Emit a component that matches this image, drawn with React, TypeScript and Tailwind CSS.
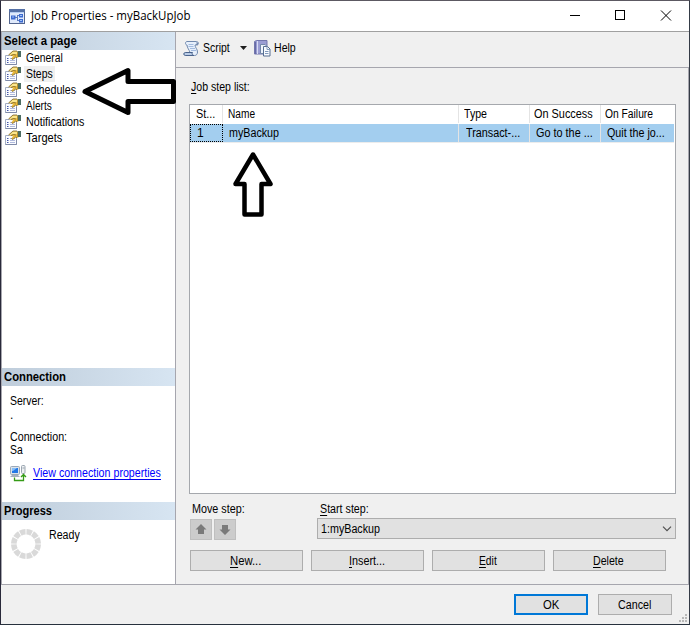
import React, { useLayoutEffect, useRef, useState } from 'react';

// Text condensed or widened to an exact width.
function T({ w, children, className = '' }: { w: number; children: React.ReactNode; className?: string }) {
  const ref = useRef<HTMLSpanElement>(null);
  const [scale, setScale] = useState(1);
  useLayoutEffect(() => {
    if (ref.current) setScale(w / ref.current.offsetWidth);
  }, [w]);
  return (
    <span className="inline-block overflow-visible text-left align-top" style={{ width: w }}>
      <span ref={ref} className={`inline-block origin-left whitespace-nowrap ${className}`} style={{ transform: `scaleX(${scale})` }}>
        {children}
      </span>
    </span>
  );
}

const U = ({ children }: { children: React.ReactNode }) => (
  <span className="underline decoration-1 underline-offset-2">{children}</span>
);

function PageIcon() {
  return (
    <svg width="16" height="16" viewBox="0 0 16 16" className="shrink-0">
      <path d="M.5 5.500h11v9H.5z" fill="#fbfcff" stroke="#a3adc4" />
      <path d="M.5 14.500h11V9" fill="none" stroke="#7f8aa8" />
      <path d="M2 8h1.500v1H2zM2 10h1.500v1H2zM2 12h1.500v1H2z" fill="#4254a8" />
      <path d="M5 8h5v1H5zM5 10h5v1H5zM5 12h5v1H5z" fill="#b0badd" />
      <path d="M3.500 5L8 1h4l2 1.500V7l-2 1-1.500-1L8 9.500 6.500 8.500 8 6z" fill="#e9b93c" />
      <path d="M8 1.500h3.500L13 3l-2 1.500L8.500 4 6 5H4.500z" fill="#fbe68c" />
      <path d="M3.500 5L8 1h4M6 5.500l2.500-1L11 5M6.500 8.500L8 9.500l2.500-2.500 1.500 1" fill="none" stroke="#766129" strokeWidth=".8" />
      <path d="M12.500 1H16v6h-3z" fill="#4c6c62" />
      <path d="M12.500 2v5" stroke="#b7922f" />
    </svg>
  );
}

function Header({ w, children }: { w: number; children: React.ReactNode }) {
  return (
    <div className="flex h-[18px] shrink-0 items-center bg-linear-to-r from-[#bfcddb] to-[#d7e5f2] pl-[2px]">
      <T w={w} className="font-bold">{children}</T>
    </div>
  );
}

const pages: [string, number][] = [['General', 37], ['Steps', 27], ['Schedules', 50], ['Alerts', 26], ['Notifications', 58], ['Targets', 36]];

function Sidebar() {
  return (
    <aside className="flex w-[175px] shrink-0 flex-col border-x border-[#a6a6ae] bg-white">
      <Header w={73}>Select a page</Header>
      <div className="h-[318px] pl-[3px]">
        {pages.map(([name, w]) => (
          <div key={name} className="flex h-4 items-center gap-[3px]">
            <PageIcon />
            <div className={name === 'Steps' ? 'h-4 bg-[#f0f0f0] pr-0.5 pl-[2px] leading-4' : 'h-4 pl-[2px] leading-4'}>
              <T w={w}>{name}</T>
            </div>
          </div>
        ))}
      </div>
      <Header w={62}>Connection</Header>
      <div className="h-[116px] pt-[8px] pl-2 leading-[14px]">
        <div><T w={34}>Server:</T></div>
        <div><T w={3}>.</T></div>
        <div className="mt-2"><T w={57}>Connection:</T></div>
        <div className="-mt-px"><T w={13}>Sa</T></div>
        <div className="mt-[8px] flex items-center">
          <svg width="17" height="17" viewBox="0 0 17 17">
            <rect x=".5" y="1.500" width="9" height="8" rx="1" fill="#dce3ea" stroke="#9aa8b8" />
            <rect x="2" y="3" width="6" height="5" fill="#2377e5" />
            <path d="M2 3h5L3 6H2z" fill="#85bef9" />
            <path d="M2 10h6l2 2H0z" fill="#a5b0bd" />
            <rect x="11.500" y=".5" width="3.500" height="8" rx="1" fill="#edf0f2" stroke="#9aa5b0" />
            <path d="M12.500 3h2" stroke="#9aa5b0" />
            <path d="M4.500 12.500v3h9V10M11 12l2.500-2.500 2.500 2.500" fill="none" stroke="#359b16" strokeWidth="1.300" />
          </svg>
          <span className="ml-[6px] border-b border-[#0000ee] leading-[12px] text-[#0000ff]"><T w={128}>View connection properties</T></span>
        </div>
      </div>
      <Header w={48}>Progress</Header>
      <div className="flex grow pt-[8px] pl-2">
        <svg width="32" height="32" viewBox="0 0 32 32">
          <circle cx="16" cy="16" r="12.200" fill="none" stroke="#d9d9d9" strokeWidth="5.600" pathLength="120" strokeDasharray="8.500 1.500" strokeDashoffset="-.75" />
        </svg>
        <div className="ml-[7px] leading-[14px]"><T w={31}>Ready</T></div>
      </div>
    </aside>
  );
}

function ScriptIcon() {
  return (
    <svg width="17" height="17" viewBox="0 0 17 17">
      <path d="M4 1.500h9.500c2.500 0 2.500 4 0 3.500H12c0 2.500 2.500 4 2.500 7 0 2-1 3.500-3 3.500H2.500c-2 0-2-3 0-3H7C6.500 10 4 8 4 5 2 5 2 1.500 4 1.500z" fill="#e6effb" stroke="#7189ad" />
      <path d="M5.500 4.500h5M5.500 6.500h5M7 8.500h5M8 10.500h5" stroke="#a3bbdf" />
      <path d="M2.500 12.500h7c-1 1 0 3 1.500 3H2.500c-2 0-2-3 0-3z" fill="#b9cce7" stroke="#4b648c" />
      <path d="M13 2c1 .5 1 2-.5 3h2c1-1 .5-3-1.500-3z" fill="#6981a7" />
    </svg>
  );
}

function HelpIcon() {
  return (
    <svg width="17" height="17" viewBox="0 0 17 17">
      <path d="M.5 1.500l2-1h10.500v13.500H.5z" fill="#9a9dd3" stroke="#7376ad" />
      <path d="M3.500 1v13" stroke="#d9dcf4" />
      <path d="M1.500 2v12" stroke="#686ca6" />
      <path d="M6.500 4.500h4.500l2 2v7H6.500z" fill="#eef4fc" stroke="#7287a8" />
      <path d="M9.500 6.500h4l2.500 2.500v7H9.500z" fill="#f9fcff" stroke="#566e91" />
      <path d="M13 6.500v3h3M11 11.500h3.500M11 13.500h3.500" fill="none" stroke="#829abb" />
    </svg>
  );
}

const cell = 'flex items-center border-r border-[#e4e4e4]';

function StepTable() {
  return (
    <div className="h-[390px] w-[487px] border border-[#a5a8ad] bg-white">
      <div className="grid h-[19px] grid-cols-[33px_236px_71px_71px_74px] pb-px">
        <div className={`${cell} pl-[6px]`}><T w={19}>St...</T></div>
        <div className={`${cell} pl-[5px]`}><T w={27}>Name</T></div>
        <div className={`${cell} pl-[5px]`}><T w={23}>Type</T></div>
        <div className={`${cell} pl-[4px]`}><T w={59}>On Success</T></div>
        <div className="flex items-center pl-[4px]"><T w={48}>On Failure</T></div>
      </div>
      <div className="grid h-[18px] w-[484px] grid-cols-[33px_236px_71px_71px_73px] bg-[#a3ceef]">
        <div className="flex items-center border border-dotted border-black pl-[6px]"><T w={7}>1</T></div>
        <div className={`${cell} pl-[6px]`}><T w={50}>myBackup</T></div>
        <div className={`${cell} pl-[7px]`}><T w={54}>Transact-...</T></div>
        <div className={`${cell} pl-[6px]`}><T w={57}>Go to the ...</T></div>
        <div className="flex items-center pl-[6px]"><T w={58}>Quit the jo...</T></div>
      </div>
      <div className="h-px w-[484px] bg-[#ececec]" />
    </div>
  );
}

const button = 'flex h-[21px] items-center justify-center border border-[#adadad] bg-[#e1e1e1]';

function Main() {
  return (
    <main className="flex w-[513px] flex-col bg-[#f0f0f0]">
      <div className="flex h-[36px] shrink-0 items-center border-b border-[#a6a6ae] pb-[3px] pl-[7px]">
        <ScriptIcon />
        <span className="ml-[3px]"><T w={27}>Script</T></span>
        <svg width="7" height="4" className="ml-[10px]"><path d="M0 0h7L3.500 4z" fill="#1e1e1e" /></svg>
        <span className="ml-[7px]"><HelpIcon /></span>
        <span className="ml-[3px]"><T w={22}>Help</T></span>
      </div>
      <div className="flex grow flex-col border-r border-[#a6a6ae] pl-[13px]">
        <div className="h-[36px] pt-[12px] pl-[2px] leading-[14px]"><T w={59}><U>J</U>ob step list:</T></div>
        <StepTable />
        <div className="flex pt-[8px]">
          <div className="w-[128px]">
            <div className="pl-[3px] leading-[14px]"><T w={53}>Move step:</T></div>
            <div className="mt-[3px] flex gap-[2px] pl-px">
              {[0, 180].map((r) => (
                <div key={r} className="flex h-[21px] w-[22px] items-center justify-center border border-[#bfbfbf] bg-[#cccccc]">
                  <svg width="12" height="11" viewBox="0 0 12 11"><path d="M6 0l5.500 5.500H9V10H3V5.500H.5z" fill="#7a7a7a" transform={`rotate(${r} 6 5.500)`} /></svg>
                </div>
              ))}
            </div>
          </div>
          <div>
            <div className="pl-[3px] leading-[14px]"><T w={49}><U>S</U>tart step:</T></div>
            <div className="mt-[2px] flex h-[21px] w-[359px] items-center justify-between border border-[#adadad] bg-[#e1e1e1] pr-[3px] pl-[3px]">
              <T w={59}>1:myBackup</T>
              <svg width="10" height="6" viewBox="0 0 10 6"><path d="M1 .7l4 4 4-4" fill="none" stroke="#505050" strokeWidth="1.200" /></svg>
            </div>
          </div>
        </div>
        <div className="mt-[10px] flex gap-[8px] pl-px">
          <div className={`${button} w-[113px] pr-[2px]`}><T w={31}><U>N</U>ew...</T></div>
          <div className={`${button} w-[113px] pr-[2px]`}><T w={36}><U>I</U>nsert...</T></div>
          <div className={`${button} w-[113px] pr-[2px]`}><T w={18}><U>E</U>dit</T></div>
          <div className={`${button} w-[113px] pr-[2px]`}><T w={31}><U>D</U>elete</T></div>
        </div>
      </div>
    </main>
  );
}

export default function App() {
  return (
    <div className="relative flex h-[625px] w-[690px] flex-col overflow-hidden border border-t-[#5c5962] border-r-[#343b46] border-b-[#27313d] border-l-[#29293a] bg-[#f0f0f0] font-['Liberation_Sans',Arial,sans-serif] text-[12px] leading-[16px] text-black">
      <header className="flex h-[31px] shrink-0 items-center border-b border-[#a0a0a0] bg-white pl-[8px] font-['Open_Sans',sans-serif]">
        <svg width="16" height="15" viewBox="0 0 16 15">
          <rect x=".5" y=".5" width="15" height="14" fill="#dfe9fb" stroke="#52658f" />
          <path d="M0 0h16v3H0z" fill="#5470a6" />
          <path d="M1 3h14v1H1z" fill="#b4cbf0" />
          <path d="M6 8.500h2.500M8.500 6v6M8.500 6.500h2M8.500 11.500h2" fill="none" stroke="#5878bd" />
          <path d="M2 6.500h4.500v4H2zM10 5h4v3.500h-4zM10 10h4v3.500h-4z" fill="#3d6bd0" />
          <path d="M3 7.500h2v1H3zM11 6h2v1h-2zM11 11h2v1h-2z" fill="#9fc0f5" />
        </svg>
        <span className="ml-[6px]"><T w={160}>Job Properties - myBackUpJob</T></span>
        <div className="ml-auto flex items-center pr-[17px]">
          <svg width="102" height="12" viewBox="0 0 102 12" fill="none" stroke="black" shapeRendering="crispEdges">
            <path d="M0 5.500h10M45.500 .5h9v9h-9z" />
            <path d="M91 .5l10 10M101 .5L91 10.500" shapeRendering="auto" />
          </svg>
        </div>
      </header>
      <div className="flex h-[553px] shrink-0 border-b border-[#a6a6ae]">
        <Sidebar />
        <Main />
      </div>
      <footer className="flex grow justify-end gap-[10px] pt-[9px] pr-[17px]">
        <div className="flex h-[21px] w-[74px] items-center justify-center border-2 border-[#0078d7] bg-[#e1e1e1] pr-px"><T w={16}>OK</T></div>
        <div className={`${button} w-[74px] pr-[2px]`}><T w={33}>Cancel</T></div>
      </footer>
      <svg className="absolute right-[2px] bottom-[2px]" width="8" height="8" fill="#b8b8b8">
        <path d="M6 0h2v2H6zM3 3h2v2H3zM6 3h2v2H6zM0 6h2v2H0zM3 6h2v2H3zM6 6h2v2H6z" />
      </svg>
      <svg className="absolute top-[66px] left-[79px]" width="98" height="52" viewBox="80 67 98 52">
        <path d="M85 91.500L128 70.500V81.500H173.500V101.500H128V112.500z" fill="white" stroke="black" strokeWidth="5" strokeLinejoin="round" />
      </svg>
      <svg className="absolute top-[149px] left-[229px]" width="48" height="70" viewBox="230 150 48 70">
        <path d="M253 154.500L270.500 184H261.500V214.500H244.500V184H235.500z" fill="white" stroke="black" strokeWidth="4.500" strokeLinejoin="round" />
      </svg>
    </div>
  );
}
